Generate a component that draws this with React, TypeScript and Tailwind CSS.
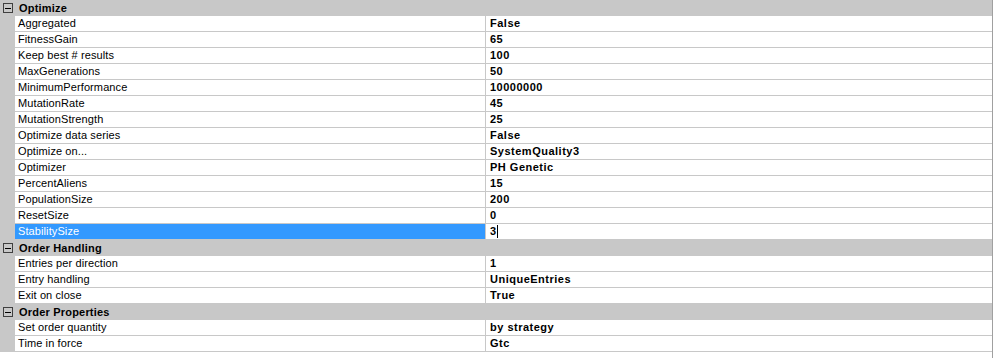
import React from "react";

type Prop = { name: string; value: string; selected?: boolean };
type Category = { title: string; props: Prop[] };

const categories: Category[] = [
  {
    title: "Optimize",
    props: [
      { name: "Aggregated", value: "False" },
      { name: "FitnessGain", value: "65" },
      { name: "Keep best # results", value: "100" },
      { name: "MaxGenerations", value: "50" },
      { name: "MinimumPerformance", value: "10000000" },
      { name: "MutationRate", value: "45" },
      { name: "MutationStrength", value: "25" },
      { name: "Optimize data series", value: "False" },
      { name: "Optimize on...", value: "SystemQuality3" },
      { name: "Optimizer", value: "PH Genetic" },
      { name: "PercentAliens", value: "15" },
      { name: "PopulationSize", value: "200" },
      { name: "ResetSize", value: "0" },
      { name: "StabilitySize", value: "3", selected: true },
    ],
  },
  {
    title: "Order Handling",
    props: [
      { name: "Entries per direction", value: "1" },
      { name: "Entry handling", value: "UniqueEntries" },
      { name: "Exit on close", value: "True" },
    ],
  },
  {
    title: "Order Properties",
    props: [
      { name: "Set order quantity", value: "by strategy" },
      { name: "Time in force", value: "Gtc" },
    ],
  },
];

function MinusBox() {
  return (
    <svg width="10" height="10" viewBox="0 0 10 10" className="block">
      <rect x="0.5" y="0.5" width="9" height="9" fill="none" stroke="#404040" />
      <path d="M2 5.5H8" stroke="#000" />
    </svg>
  );
}

function CategoryRow({ title }: { title: string }) {
  return (
    <div className="flex h-4 items-center bg-[#c8c8c8]">
      <div className="flex w-[15px] justify-center pl-px">
        <MinusBox />
      </div>
      <span className="pl-[4px] font-bold leading-4 tracking-[0.2px] text-black">{title}</span>
    </div>
  );
}

function PropRow({ prop }: { prop: Prop }) {
  return (
    <div className="flex h-4">
      <div className="w-[15px] bg-[#c8c8c8]" />
      <div
        className={
          prop.selected
            ? "w-[471px] border-b border-r border-[#c8c8c8] bg-[#3399ff] pl-[3px] leading-[15px] tracking-[0.1px] text-white"
            : "w-[471px] border-b border-r border-[#c8c8c8] bg-white pl-[3px] leading-[15px] tracking-[0.1px] text-black"
        }
      >
        {prop.name}
      </div>
      <div className="flex flex-1 items-center border-b border-[#c8c8c8] bg-white pl-[4px] font-bold leading-[15px] tracking-[0.5px] text-black">
        {prop.value}
        {prop.selected && <span className="inline-block h-[13px] w-px bg-black" />}
      </div>
    </div>
  );
}

export default function App() {
  return (
    <div className="h-[358px] w-[996px] bg-white font-['Liberation_Sans',Arial,sans-serif] text-[11px]">
      <div className="h-[358px] w-[993px] border-r border-[#a0a0a0]">
        {categories.map((cat) => (
          <div key={cat.title}>
            <CategoryRow title={cat.title} />
            {cat.props.map((p) => (
              <PropRow key={p.name} prop={p} />
            ))}
          </div>
        ))}
      </div>
    </div>
  );
}
